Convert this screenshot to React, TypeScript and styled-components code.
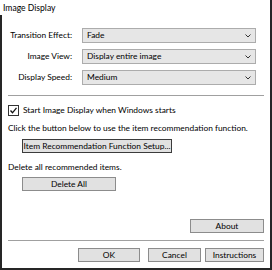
import styled, { createGlobalStyle } from 'styled-components'

const Global = createGlobalStyle`
  html, body {
    margin: 0;
    padding: 0;
    background: #ffffff;
  }
  body {
    font-family: Lato, "Open Sans", sans-serif;
    font-size: 8.4px;
    color: #000000;
  }
`

const Window = styled.div`
  width: 272px;
  height: 270px;
  box-sizing: border-box;
  display: flex;
  flex-direction: column;
  background: #ffffff;
  border-right: 2px solid #262626;
`

const TitleBar = styled.div`
  height: 15px;
  padding: 3px 0 0 3px;
  box-sizing: border-box;
  line-height: 11px;
  font-size: 8.6px;
`

const Body = styled.div`
  flex: 1;
  display: flex;
  flex-direction: column;
  border-left: 2px solid #262626;
  border-bottom: 2px solid #262626;
  padding: 13px 6px 6px 6px;
`

const FormGrid = styled.div`
  display: grid;
  grid-template-columns: 64px 174px;
  column-gap: 10px;
  row-gap: 6px;
  align-items: center;
`

const Label = styled.label`
  text-align: right;
  white-space: nowrap;
  line-height: 15px;
`

const Select = styled.div`
  height: 15px;
  box-sizing: border-box;
  display: flex;
  align-items: center;
  justify-content: space-between;
  padding: 0 4px 0 4px;
  background: #e6e6e6;
  border: 1px solid #acacac;
  line-height: 13px;
`

const Separator = styled.div<{ $top: number }>`
  height: 1px;
  background: #a0a0a0;
  margin-top: ${({ $top }) => $top}px;
`

const CheckRow = styled.div`
  display: flex;
  align-items: center;
  gap: 4px;
  margin-top: 8px;
  line-height: 12px;
`

const CheckBox = styled.span`
  width: 11px;
  height: 11px;
  box-sizing: border-box;
  border: 1px solid #333333;
  background: #ffffff;
  display: flex;
  align-items: center;
  justify-content: center;
`

const Text = styled.div<{ $top: number }>`
  margin-top: ${({ $top }) => $top}px;
  line-height: 12px;
  white-space: nowrap;
`

const Button = styled.button<{ $w: number; $focus?: boolean; $left?: number }>`
  width: ${({ $w }) => $w}px;
  height: 14px;
  box-sizing: border-box;
  padding: 0;
  margin: 0 0 0 ${({ $left }) => $left ?? 0}px;
  font: inherit;
  line-height: 12px;
  color: #000000;
  background: #e1e1e1;
  border: 1px solid ${({ $focus }) => ($focus ? '#3c3c3c' : '#8c8c8c')};
  white-space: nowrap;
`

const Indented = styled.div<{ $top: number }>`
  display: flex;
  padding-left: 14px;
  margin-top: ${({ $top }) => $top}px;
`

const Spacer = styled.div`
  flex: 1;
`

const RightRow = styled.div<{ $top: number }>`
  display: flex;
  justify-content: flex-end;
  margin-top: ${({ $top }) => $top}px;
`

const Chevron = () => (
  <svg width="6" height="4" viewBox="0 0 6 4">
    <path d="M0.5 0.5 L3 3 L5.5 0.5" stroke="#333" strokeWidth="1" fill="none" />
  </svg>
)

const Check = () => (
  <svg width="9" height="9" viewBox="0 0 9 9">
    <path d="M1.5 4.5 L3.5 6.8 L7.5 1.8" stroke="#111" strokeWidth="1.3" fill="none" />
  </svg>
)

const fields = [
  { label: 'Transition Effect:', value: 'Fade' },
  { label: 'Image View:', value: 'Display entire image' },
  { label: 'Display Speed:', value: 'Medium' },
]

export default function App() {
  return (
    <>
      <Global />
      <Window>
        <TitleBar>Image Display</TitleBar>
        <Body>
          <FormGrid>
            {fields.map((f) => [
              <Label key={f.label + 'l'}>{f.label}</Label>,
              <Select key={f.label + 's'}>
                <span>{f.value}</span>
                <Chevron />
              </Select>,
            ])}
          </FormGrid>
          <Separator $top={10} />
          <CheckRow>
            <CheckBox>
              <Check />
            </CheckBox>
            <span>Start Image Display when Windows starts</span>
          </CheckRow>
          <Text $top={6}>Click the button below to use the item recommendation function.</Text>
          <Indented $top={5}>
            <Button $w={150} $focus>
              Item Recommendation Function Setup...
            </Button>
          </Indented>
          <Text $top={8}>Delete all recommended items.</Text>
          <Indented $top={4}>
            <Button $w={94}>Delete All</Button>
          </Indented>
          <Spacer />
          <RightRow $top={0}>
            <Button $w={74}>About</Button>
          </RightRow>
          <Separator $top={7} />
          <RightRow $top={7}>
            <Button $w={62}>OK</Button>
            <Button $w={53} $left={8}>Cancel</Button>
            <Button $w={59} $left={4}>Instructions</Button>
          </RightRow>
        </Body>
      </Window>
    </>
  )
}
